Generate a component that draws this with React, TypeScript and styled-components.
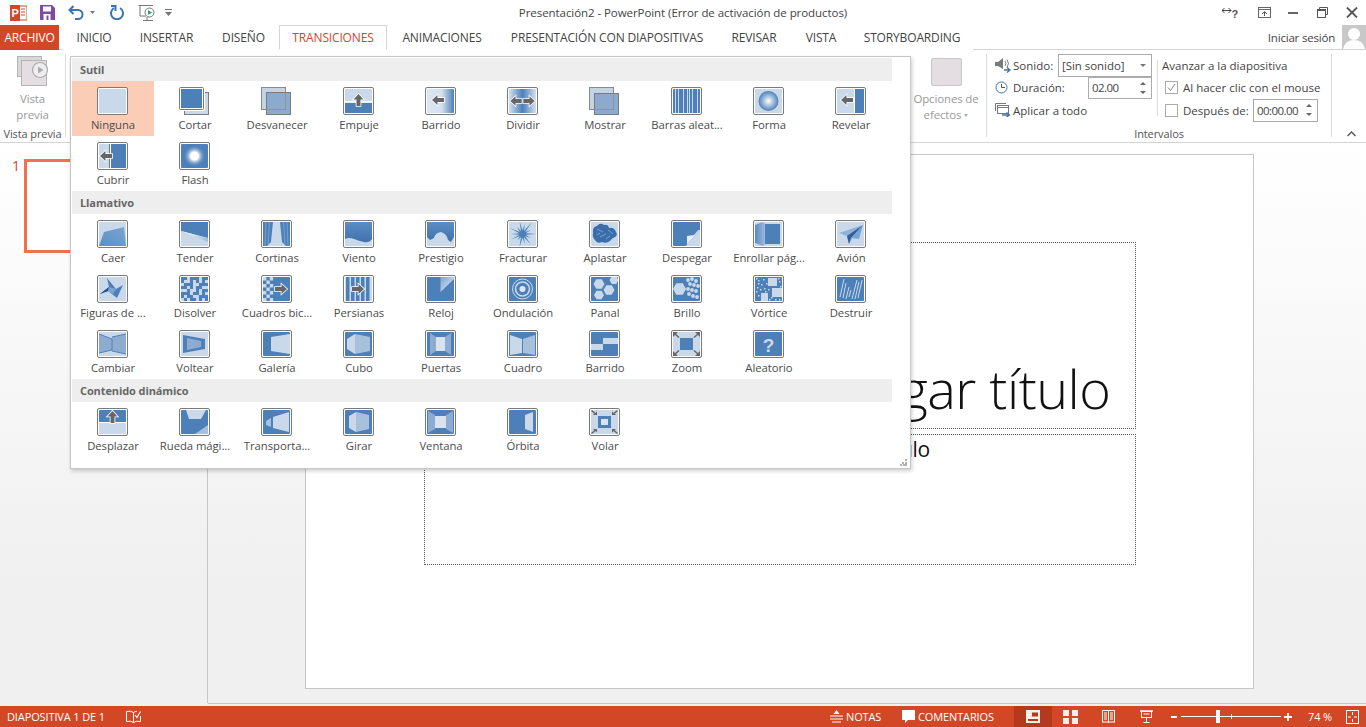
import React from 'react';
import styled, { createGlobalStyle } from 'styled-components';

const B = '#4d80b9';
const L = '#c9d9ea';
const M = '#8eacd0';
const G = '#666666';
const ACCENT = '#d24726';
const SANS = '"Open Sans", "Noto Sans", sans-serif';

const Global = createGlobalStyle`
  html, body { margin: 0; padding: 0; background: #fff; overflow: hidden; }
  * { box-sizing: border-box; }
  #root { width: 1366px; height: 727px; }
`;

const Page = styled.div`
  position: relative;
  width: 1366px;
  height: 727px;
  display: flex;
  flex-direction: column;
  font-family: ${SANS};
  font-size: 11.5px;
  color: #444;
  background: #fff;
  overflow: hidden;
`;

const TitleBar = styled.div`
  height: 25px;
  display: grid;
  grid-template-columns: 1fr auto 1fr;
  align-items: center;
`;
const Qat = styled.div`
  display: flex;
  align-items: center;
  padding-left: 10px;
  height: 25px;
`;
const QatSlot = styled.span<{ $w: number }>`
  width: ${p => p.$w}px;
  display: flex;
  align-items: center;
`;
const Title = styled.div`
  font-size: 11.5px;
  color: #444;
  letter-spacing: -0.065px;
`;
const WinControls = styled.div`
  display: flex;
  justify-content: flex-end;
  align-items: center;
  padding-right: 8px;
  height: 25px;
`;
const WinSlot = styled.span<{ $w: number }>`
  width: ${p => p.$w}px;
  display: flex;
  justify-content: flex-start;
  align-items: center;
`;

const TabBar = styled.div`
  height: 25px;
  display: flex;
  align-items: stretch;
  border-bottom: 1px solid #d4d4d4;
`;
const FileTab = styled.div`
  width: 59px;
  height: 25px;
  background: ${ACCENT};
  color: #fff;
  margin-right: 4px;
  display: flex;
  align-items: center;
  justify-content: center;
  font-size: 12px;
  letter-spacing: -0.15px;
`;
const Tab = styled.div<{ $w: number; $active?: boolean }>`
  width: ${p => p.$w}px;
  height: 25px;
  display: flex;
  align-items: center;
  justify-content: center;
  font-size: 12px;
  letter-spacing: -0.15px;
  color: ${p => (p.$active ? ACCENT : '#444')};
  background: #fff;
  ${p => (p.$active ? 'border: 1px solid #d4d4d4; border-bottom: 1px solid #fff;' : '')}
`;
const TabSpacer = styled.div`
  flex: 1;
`;
const SignIn = styled.div`
  display: flex;
  align-items: center;
  justify-content: flex-end;
  gap: 7px;
  font-size: 11.5px;
  letter-spacing: -0.2px;
`;
const Avatar = styled.div`
  width: 24px;
  height: 24px;
  overflow: hidden;
  background: #c8c8c8;
  display: flex;
`;

const Ribbon = styled.div`
  height: 93px;
  display: flex;
  border-bottom: 1px solid #d4d4d4;
  background: #fff;
`;
const PreviewGroup = styled.div`
  width: 66px;
  margin: 4px 0 5px;
  border-right: 1px solid #dcdcdc;
  display: flex;
  flex-direction: column;
  align-items: center;
`;
const PreviewIcon = styled.div`
  height: 31px;
  margin-top: 2px;
  display: flex;
`;
const MutedLabel = styled.div<{ $top?: number }>`
  color: #9a9a9a;
  text-align: center;
  line-height: 16px;
  margin-top: ${p => p.$top ?? 4}px;
  letter-spacing: -0.15px;
  white-space: nowrap;
`;
const MutedCaret = styled.span`
  display: inline-block;
  width: 0;
  height: 0;
  margin-left: 3px;
  vertical-align: middle;
  border-left: 2.5px solid transparent;
  border-right: 2.5px solid transparent;
  border-top: 3px solid #aaa;
`;
const GroupName = styled.div`
  margin-top: auto;
  margin-bottom: -4px;
  line-height: 14px;
  text-align: center;
  color: #555;
  letter-spacing: -0.1px;
  font-size: 11px;
  white-space: nowrap;
`;
const RibbonGap = styled.div`
  width: 847px;
`;
const EffectGroup = styled.div`
  width: 74px;
  margin: 4px 0 5px;
  border-right: 1px solid #dcdcdc;
  display: flex;
  flex-direction: column;
  align-items: center;
  padding-right: 7px;
`;
const EffectSwatch = styled.div`
  width: 31px;
  height: 28px;
  margin: 4px 0 0 0;
  border: 1px solid #c8c4c7;
  border-radius: 2px;
  background: #e4dee3;
`;
const TimingGroup = styled.div`
  width: 345px;
  margin: 4px 0 5px;
  border-right: 1px solid #dcdcdc;
  display: flex;
  flex-direction: column;
`;
const TimingColumns = styled.div`
  display: flex;
  flex: 1;
`;
const SoundCol = styled.div`
  width: 170px;
  padding: 0 5px 0 8px;
  display: flex;
  flex-direction: column;
`;
const AdvanceCol = styled.div`
  width: 175px;
  height: 56px;
  margin-top: 6px;
  border-left: 1px solid #dcdcdc;
  padding-left: 4px;
  display: flex;
  flex-direction: column;
`;
const CtlRow = styled.div<{ $h?: number }>`
  height: ${p => p.$h ?? 23}px;
  display: flex;
  align-items: center;
`;
const CtlIcon = styled.span`
  width: 18px;
  display: flex;
  align-items: center;
`;
const CtlText = styled.span<{ $w?: number }>`
  ${p => (p.$w ? `width: ${p.$w}px;` : '')}
  letter-spacing: 0;
  white-space: nowrap;
`;
const Combo = styled.div<{ $w: number; $h: number; $num?: boolean }>`
  width: ${p => p.$w}px;
  height: ${p => p.$h}px;
  flex: none;
  border: 1px solid #ababab;
  display: flex;
  align-items: center;
  padding-left: 3px;
  background: #fff;
  letter-spacing: ${p => (p.$num ? '-0.55px' : '-0.05px')};
`;
const ComboArrow = styled.span`
  margin-left: auto;
  margin-right: 5px;
  width: 0;
  height: 0;
  border-left: 3px solid transparent;
  border-right: 3px solid transparent;
  border-top: 3px solid #777;
`;
const SpinBtns = styled.span`
  margin-left: auto;
  margin-right: 5px;
  display: flex;
  flex-direction: column;
  gap: 6px;
`;
const Up = styled.span`
  width: 0;
  height: 0;
  border-left: 3px solid transparent;
  border-right: 3px solid transparent;
  border-bottom: 3px solid #666;
`;
const Down = styled.span`
  width: 0;
  height: 0;
  border-left: 3px solid transparent;
  border-right: 3px solid transparent;
  border-top: 3px solid #666;
`;
const Check = styled.span`
  width: 13px;
  height: 13px;
  flex: none;
  margin: 0 5px 0 3px;
  border: 1px solid #ababab;
  background: #fff;
  display: flex;
`;
const CollapseCell = styled.div`
  flex: 1;
  display: flex;
  align-items: flex-end;
  justify-content: center;
  padding: 0 0 5px 4px;
`;

const Workspace = styled.div`
  flex: 1;
  display: flex;
  background: linear-gradient(#ffffff, #f0f0f0 78%);
`;
const ThumbPanel = styled.aside`
  width: 208px;
  padding: 16px 0 0 12px;
  display: flex;
  align-items: flex-start;
  border-right: 1px solid #c6c6c6;
  height: 560px;
`;
const ThumbNumber = styled.div`
  width: 12px;
  color: ${ACCENT};
  font-size: 14px;
  line-height: 14px;
  margin-top: 0;
`;
const Thumb = styled.div`
  width: 170px;
  height: 94px;
  background: #fff;
  border: 3px solid #f0704f;
`;
const EditArea = styled.main`
  flex: 1;
  padding: 11px 0 0 97px;
  height: 561px;
  border-bottom: 1px solid #c6c6c6;
`;
const Slide = styled.div`
  width: 949px;
  height: 535px;
  background: #fff;
  border: 1px solid #c6c6c6;
  padding: 87px 0 0 118px;
  display: flex;
  flex-direction: column;
  gap: 5px;
`;
const TitleHolder = styled.div`
  width: 712px;
  height: 187px;
  border: 1px dotted #555;
  display: flex;
  align-items: flex-end;
  justify-content: center;
  font-size: 54px;
  font-weight: 300;
  line-height: 56px;
  color: #111;
  white-space: nowrap;
  padding-bottom: 12px;
  letter-spacing: -0.5px;
`;
const SubHolder = styled.div`
  width: 712px;
  height: 131px;
  border: 1px dotted #555;
  text-align: center;
  font-size: 21px;
  line-height: 28px;
  color: #111;
  letter-spacing: -0.3px;
`;

const StatusBar = styled.footer`
  height: 21px;
  margin-top: -1px;
  background: ${ACCENT};
  color: #fff;
  font-size: 11px;
  display: flex;
  align-items: center;
  padding-left: 7px;
  letter-spacing: -0.12px;
`;
const StatusText = styled.span<{ $w: number; $pad?: number }>`
  width: ${p => p.$w}px;
  padding-left: ${p => p.$pad ?? 0}px;
  white-space: nowrap;
`;
const StatusIcon = styled.span<{ $w: number }>`
  width: ${p => p.$w}px;
  display: flex;
  align-items: center;
`;
const ViewActive = styled.span`
  width: 38px;
  height: 21px;
  background: #b5391d;
  display: flex;
  align-items: center;
  justify-content: center;
  margin-right: 11px;
`;
const ZoomSlider = styled.span`
  position: relative;
  width: 100px;
  height: 1px;
  background: #fff;
  margin: 0 3px 0 4px;
`;
const ZoomThumb = styled.span`
  position: absolute;
  left: 35px;
  top: -6px;
  width: 4px;
  height: 13px;
  background: #fff;
`;
const ZoomTick = styled.span`
  position: absolute;
  left: 50px;
  top: -2px;
  width: 1px;
  height: 5px;
  background: #fff;
`;

const Gallery = styled.div`
  position: absolute;
  left: 70px;
  top: 56px;
  width: 841px;
  height: 413px;
  background: #fff;
  border: 1px solid #c6c6c6;
  box-shadow: 1px 2px 4px rgba(0, 0, 0, 0.2);
  padding: 1px 18px 0 1px;
`;
const SectionHead = styled.div`
  height: 23px;
  background: #eeeeee;
  padding-left: 8px;
  display: flex;
  align-items: center;
  font-weight: 700;
  font-size: 11px;
  color: #666;
  letter-spacing: -0.1px;
`;
const Grid = styled.div`
  display: grid;
  grid-template-columns: repeat(10, 82px);
  grid-auto-rows: 55px;
`;
const Item = styled.div<{ $sel?: boolean }>`
  display: flex;
  flex-direction: column;
  align-items: center;
  padding-top: 6px;
  background: ${p => (p.$sel ? '#fccdb6' : 'transparent')};
`;
const ItemLabel = styled.div`
  margin-top: 1px;
  line-height: 16px;
  color: #4c4c4c;
  font-size: 11.3px;
  letter-spacing: -0.05px;
  white-space: nowrap;
`;
const Grip = styled.svg`
  position: absolute;
  right: 3px;
  bottom: 2px;
`;
const ThumbSvg = styled.svg`
  display: block;
`;
const HiddenDefs = styled.svg`
  position: absolute;
`;

/* ---------- transition thumbnails ---------- */
const Frame: React.FC<{ bg?: string; children?: React.ReactNode }> = ({ bg = L, children }) => (
  <ThumbSvg width="32" height="29" viewBox="0 0 32 29">
    <rect x="0.5" y="0.5" width="30" height="27" rx="1.5" fill="#fff" stroke="#7a7a7a" />
    <svg x="2" y="2" width="27" height="24" viewBox="0 0 27 24">
      <rect width="27" height="24" rx="1" fill={bg} />
      {children}
    </svg>
  </ThumbSvg>
);

const Defs = () => (
  <HiddenDefs width="0" height="0">
    <defs>
      <linearGradient id="gWipe" x1="0" x2="1" y1="0" y2="0">
        <stop offset="0" stopColor="#dbe6f1" />
        <stop offset="0.55" stopColor="#d3e0ee" />
        <stop offset="1" stopColor={B} />
      </linearGradient>
      <linearGradient id="gSplit" x1="0" x2="1" y1="0" y2="0">
        <stop offset="0" stopColor="#d3e0ee" />
        <stop offset="0.5" stopColor={B} />
        <stop offset="1" stopColor="#d3e0ee" />
      </linearGradient>
      <radialGradient id="gShape">
        <stop offset="0" stopColor="#ffffff" />
        <stop offset="1" stopColor={B} />
      </radialGradient>
      <radialGradient id="gFlash">
        <stop offset="0" stopColor="#ffffff" />
        <stop offset="0.35" stopColor="#ffffff" />
        <stop offset="1" stopColor={B} stopOpacity="0" />
      </radialGradient>
      <linearGradient id="gFall" x1="0" x2="1" y1="1" y2="0">
        <stop offset="0" stopColor="#5b8ec6" />
        <stop offset="1" stopColor="#7ba5d4" />
      </linearGradient>
      <linearGradient id="gDrape" x1="0" x2="0" y1="0" y2="1">
        <stop offset="0" stopColor="#5c8dc4" />
        <stop offset="1" stopColor="#3f72ae" />
      </linearGradient>
      <linearGradient id="gFold" x1="0" x2="1" y1="0" y2="0">
        <stop offset="0" stopColor="#5a8ac2" />
        <stop offset="1" stopColor="#9dbade" />
      </linearGradient>
      <linearGradient id="gHang" x1="0" x2="1" y1="0" y2="1">
        <stop offset="0" stopColor="#7ba5d4" />
        <stop offset="1" stopColor="#e4ecf5" />
      </linearGradient>
      <linearGradient id="gWedge" x1="0" x2="1" y1="0" y2="0">
        <stop offset="0" stopColor="#ffffff" />
        <stop offset="1" stopColor="#9fbcdb" />
      </linearGradient>
    </defs>
  </HiddenDefs>
);

const Arrow: React.FC<{ x: number; y: number; dir?: 'l' | 'r' | 'u'; s?: number }> = ({ x, y, dir = 'l', s = 1 }) => {
  const rot = dir === 'l' ? 0 : dir === 'r' ? 180 : 90;
  return (
    <polygon
      points="-6,0 -0.5,-5 -0.5,-2 6,-2 6,2 -0.5,2 -0.5,5"
      transform={`translate(${x} ${y}) rotate(${rot}) scale(${s})`}
      fill={G}
      stroke="#fff"
      strokeWidth="1.6"
      paintOrder="stroke"
    />
  );
};

const hexPts = (cx: number, cy: number, r: number) =>
  [0, 60, 120, 180, 240, 300]
    .map(a => `${cx + r * Math.cos((a * Math.PI) / 180)},${cy + r * Math.sin((a * Math.PI) / 180)}`)
    .join(' ');

const burst = (() => {
  const out: string[] = [];
  const radii = [14, 9, 13, 10, 15, 8, 12, 11, 14, 9, 13, 10, 15, 9];
  radii.forEach((r, i) => {
    const a = (i / radii.length) * Math.PI * 2;
    const a2 = ((i + 0.5) / radii.length) * Math.PI * 2;
    out.push(`${13.5 + r * Math.cos(a)},${12 + r * Math.sin(a)}`);
    out.push(`${13.5 + 3.4 * Math.cos(a2)},${12 + 3.4 * Math.sin(a2)}`);
  });
  return out.join(' ');
})();

/* rows of the dissolve pattern, one letter per cell: x = dark block */
const DISSOLVE_ROWS = [
  'xx.xxx.xx',
  'x..x.x.x.',
  '.xxx..xxx',
  'xx.x.xx..',
  '..x..x.xx',
  'xxx.xx.x.',
  'x.xx..xxx',
  '.x.xx.x.x',
];

const I: Record<string, React.ReactNode> = {
  Ninguna: <Frame />,
  Cortar: (
    <ThumbSvg width="32" height="29" viewBox="0 0 32 29">
      <rect x="5.5" y="5.5" width="24" height="22" fill={L} stroke="#7a7a7a" />
      <rect x="0.5" y="0.5" width="24" height="22" rx="1" fill={B} stroke="#fff" strokeWidth="3" />
      <rect x="0.5" y="0.5" width="24" height="22" rx="1" fill="none" stroke="#7a7a7a" />
    </ThumbSvg>
  ),
  Desvanecer: (
    <ThumbSvg width="32" height="29" viewBox="0 0 32 29">
      <rect x="0.5" y="0.5" width="24" height="22" fill="#c3d4e7" stroke="#8a8a8a" />
      <rect x="5.5" y="5.5" width="24" height="22" fill="#8caacd" stroke="#7a7a7a" />
      <rect x="0.5" y="0.5" width="24" height="22" fill="none" stroke="#8a8a8a" strokeOpacity="0.7" />
    </ThumbSvg>
  ),
  Empuje: (
    <Frame>
      <rect y="14" width="27" height="10" fill={B} />
      <rect y="12" width="27" height="1.5" fill="#fff" />
      <Arrow x={13.5} y={11} dir="u" s={1} />
    </Frame>
  ),
  Barrido: (
    <Frame bg="url(#gWipe)">
      <Arrow x={11} y={11} />
    </Frame>
  ),
  Dividir: (
    <Frame bg="url(#gSplit)">
      <Arrow x={7} y={12} s={0.95} />
      <Arrow x={20} y={12} dir="r" s={0.95} />
    </Frame>
  ),
  Mostrar: (
    <ThumbSvg width="32" height="29" viewBox="0 0 32 29">
      <rect x="0.5" y="0.5" width="24" height="22" fill="#c3d4e7" stroke="#8a8a8a" />
      <rect x="5.5" y="6.5" width="24" height="21" fill="#8caacd" stroke="#7a7a7a" />
      <rect x="0.5" y="0.5" width="24" height="22" fill="none" stroke="#8a8a8a" strokeOpacity="0.7" />
    </ThumbSvg>
  ),
  Barras: (
    <Frame bg={B}>
      {[2, 5, 10, 14, 16, 19, 24].map(x => (
        <rect key={x} x={x} width="1" height="24" fill={L} />
      ))}
    </Frame>
  ),
  Forma: (
    <Frame>
      <circle cx="13.5" cy="12" r="10" fill="url(#gShape)" />
    </Frame>
  ),
  Revelar: (
    <Frame>
      <rect x="18" width="9" height="24" fill={B} />
      <rect x="17" width="1" height="24" fill="#fff" />
      <Arrow x={10} y={11} />
    </Frame>
  ),
  Cubrir: (
    <Frame>
      <rect x="12" width="15" height="24" fill={B} />
      <rect x="10" width="1" height="24" fill="#777" />
      <rect x="11" width="1" height="24" fill="#fff" />
      <Arrow x={7} y={12} />
    </Frame>
  ),
  Flash: (
    <Frame bg={B}>
      <circle cx="13.5" cy="12" r="11" fill="url(#gFlash)" />
    </Frame>
  ),
  Caer: (
    <Frame>
      <polygon points="5,10 25,5 27,24 0,24" fill="url(#gFall)" />
    </Frame>
  ),
  Tender: (
    <Frame>
      <polygon points="0,0 27,0 27,16 0,9" fill={B} />
      <polygon points="0,9 27,16 27,20" fill="url(#gWedge)" />
    </Frame>
  ),
  Cortinas: (
    <Frame>
      <polygon points="0,0 10,0 8,20 4,24 0,24" fill={B} />
      <polygon points="27,0 17,0 19,20 23,24 27,24" fill={B} />
      <path d="M3 0 L2 24 M6.5 0 L5 22 M24 0 L25 24 M20.5 0 L22 22" stroke="#6f9bcf" strokeWidth="1.2" />
    </Frame>
  ),
  Viento: (
    <Frame>
      <path d="M0 0 H27 V17 Q24 21 19 20 T9 17 Q4 15 0 17 Z" fill="url(#gDrape)" />
    </Frame>
  ),
  Prestigio: (
    <Frame>
      <path d="M0 0 H27 V15 L24 20 L21 18 Q20 12 14 10 Q8 11 7 16 L3 18 L0 15 Z" fill="url(#gDrape)" />
    </Frame>
  ),
  Fracturar: (
    <Frame>
      <polygon points={burst} fill={B} />
    </Frame>
  ),
  Aplastar: (
    <Frame>
      <path
        d="M2 11 Q1 5 6 4 Q9 0 13 3 Q17 2 18 6 Q23 5 25 10 Q27 13 24 15 Q21 16 19 19 Q15 22 11 20 Q6 22 4 18 Q1 15 2 11 Z"
        fill="#3a6da9"
      />
      <path d="M6 7 L12 10 M9 15 L15 12 M17 8 L22 12 M6 13 L9 11 M15 17 L19 14" stroke="#7ba4d2" strokeWidth="1" />
    </Frame>
  ),
  Despegar: (
    <Frame bg={B}>
      <polygon points="13,24 27,24 27,8 25,8" fill={L} />
      <polygon points="27,8 14,24 14,14 21,13" fill="#e4ecf5" />
      <path d="M13 24 L27 8" stroke="#9fb9d7" strokeWidth="0.8" />
    </Frame>
  ),
  Enrollar: (
    <Frame>
      <polygon points="0,3 8,0 10,2 10,22 8,24 0,21" fill="url(#gFold)" />
      <rect x="10" y="2" width="15" height="20" fill={B} />
    </Frame>
  ),
  Avion: (
    <Frame>
      <polygon points="26,3 2,11 10,14 12,22 16,15" fill="#8eb0d8" />
      <polygon points="26,3 10,14 12,22 14,16" fill="#2f5f97" />
      <polygon points="26,3 14,16 22,17" fill="#7ba4d2" />
    </Frame>
  ),
  Figuras: (
    <Frame>
      <polygon points="8,1 17,12 24,8 18,21 9,14 1,17 10,10" fill={B} />
      <polygon points="1,17 10,10 9,14" fill="#1f4f86" />
      <polygon points="10,10 17,12 14,17 9,14" fill="#7ba4d2" />
    </Frame>
  ),
  Disolver: (
    <Frame>
      {DISSOLVE_ROWS.map((row, r) =>
        row.split('').map((cell, c) =>
          cell === 'x' ? <rect key={`${r}-${c}`} x={c * 3} y={r * 3} width="3" height="3" fill={B} /> : null
        )
      )}
    </Frame>
  ),
  Cuadros: (
    <Frame bg={B}>
      {[0, 1, 2, 3, 4, 5, 6].map(r =>
        [0, 1, 2].map(c =>
          (r + c) % 2 === 0 ? <rect key={`${r}${c}`} x={c * 3.4} y={r * 3.5} width="3.4" height="3.5" fill={L} /> : null
        )
      )}
      <Arrow x={18} y={12} dir="r" />
    </Frame>
  ),
  Persianas: (
    <Frame bg={L}>
      {[1, 6, 11, 16, 21].map(x => (
        <rect key={x} x={x} width="3.5" height="24" fill={B} />
      ))}
      <Arrow x={13} y={12} dir="r" />
    </Frame>
  ),
  Reloj: (
    <Frame bg={B}>
      <polygon points="13.5,0 27,0 27,2 13.5,15" fill="url(#gHang)" />
    </Frame>
  ),
  Cambiar: (
    <Frame>
      <polygon points="0,2 13,7 13,18 0,21" fill={M} />
      <polygon points="13,5 27,2 27,22 13,19" fill={M} />
      <path d="M0 2 L13 7 V18 L0 21 M13 5 L27 2 M13 19 L27 22" stroke={B} strokeWidth="1" fill="none" />
    </Frame>
  ),
  Voltear: (
    <Frame>
      <polygon points="2,3 24,7 24,17 2,21" fill={B} />
      <polygon points="6,6 20,9 20,15 6,18" fill={M} />
    </Frame>
  ),
  Galeria: (
    <Frame bg={B}>
      <polygon points="8,5 27,2 27,22 8,19" fill={L} />
    </Frame>
  ),
  Cubo: (
    <Frame bg={B}>
      <polygon points="2,7 10,2 10,22 2,17" fill={L} />
      <polygon points="10,2 25,5 25,19 10,22" fill="#a7c0dc" />
    </Frame>
  ),
  Puertas: (
    <Frame bg={B}>
      <polygon points="3,1 9,5 9,19 3,23" fill={M} />
      <polygon points="24,1 18,5 18,19 24,23" fill={M} />
      <rect x="9" y="5" width="9" height="14" fill="#d8e3ef" />
    </Frame>
  ),
  Ondulacion: (
    <Frame bg={B}>
      <circle cx="13.5" cy="12" r="10" fill="none" stroke={L} strokeWidth="1" />
      <circle cx="13.5" cy="12" r="7" fill="none" stroke={L} strokeWidth="1.6" />
      <circle cx="13.5" cy="12" r="3" fill="#dfe8f2" />
    </Frame>
  ),
  Panal: (
    <Frame bg={B}>
      <polygon points={hexPts(8, 7, 5.5)} fill={L} />
      <polygon points={hexPts(8, 18, 5)} fill={L} />
      <polygon points={hexPts(18, 13, 5.5)} fill={L} />
      <polygon points={hexPts(23, 3, 4.5)} fill={L} />
    </Frame>
  ),
  Brillo: (
    <Frame bg={B}>
      <polygon points={hexPts(6.5, 12, 6.5)} fill={L} />
      {[
        [15, 3], [19, 2], [23, 4], [17, 7], [21, 8], [25, 9], [15, 12], [19, 13], [23, 14], [16, 17], [20, 19], [24, 20],
      ].map(([x, y]) => (
        <circle key={`${x}-${y}`} cx={x} cy={y} r="1.9" fill={L} />
      ))}
    </Frame>
  ),
  Vortice: (
    <Frame bg={B}>
      <rect x="13" y="1" width="9" height="8" fill={L} />
      <rect x="17" y="11" width="10" height="9" fill={L} />
      <rect x="6" y="16" width="7" height="8" fill={L} />
      {[
        [3, 3], [8, 2], [6, 7], [11, 6], [2, 10], [9, 11], [13, 12], [24, 4], [25, 9], [16, 20], [20, 22], [3, 18], [1, 14],
        [5, 12], [10, 14], [3, 6], [1, 1], [23, 1], [14, 22], [24, 22],
      ].map(([x, y]) => (
        <rect key={`${x}-${y}`} x={x} y={y} width="1.5" height="1.5" fill={L} />
      ))}
    </Frame>
  ),
  Destruir: (
    <Frame bg={B}>
      <path d="M3 20 L7 2 M6 21 L9 6 M9 22 L12 10 M15 22 L20 3 M18 22 L22 5 M21 21 L25 3 M12 20 L14 13" stroke={L} strokeWidth="1" />
    </Frame>
  ),
  Cuadro: (
    <Frame bg={B}>
      <polygon points="1,3 13,7 13,21 1,23" fill={L} />
      <polygon points="26,3 14,7 14,21 26,23" fill="#a7c0dc" />
    </Frame>
  ),
  BarridoB: (
    <Frame bg={B}>
      <rect x="12" y="6" width="15" height="6" fill={L} />
      <rect x="0" y="12" width="12" height="6" fill={L} />
    </Frame>
  ),
  ZoomI: (
    <Frame>
      <rect x="7" y="6" width="13" height="12" fill={B} />
      <path d="M2 2 L6 5.5 M25 2 L21 5.5 M2 22 L6 18.5 M25 22 L21 18.5" stroke={G} strokeWidth="1.5" />
      <polygon points="0,0 5,0 0,5" fill={G} />
      <polygon points="27,0 22,0 27,5" fill={G} />
      <polygon points="0,24 5,24 0,19" fill={G} />
      <polygon points="27,24 22,24 27,19" fill={G} />
    </Frame>
  ),
  Aleatorio: (
    <Frame bg={B}>
      <text x="13.5" y="19.5" textAnchor="middle" fontFamily={'"Liberation Sans", sans-serif'} fontWeight="700" fontSize="19" fill={L}>
        ?
      </text>
    </Frame>
  ),
  Desplazar: (
    <Frame bg={B}>
      <rect y="13" width="27" height="11" fill={L} />
      <rect y="12" width="27" height="1" fill="#fff" />
      <Arrow x={13.5} y={7} dir="u" />
    </Frame>
  ),
  Rueda: (
    <Frame bg={B}>
      <polygon points="5,0 25,0 20,9 8,9" fill={L} />
      <polygon points="14,24 27,15 27,24" fill="#a7c0dc" />
    </Frame>
  ),
  Transporta: (
    <Frame bg={B}>
      <polygon points="10,7 26,2 26,22 10,18" fill={L} />
      <polygon points="3,11 8,8 8,17 3,15" fill="#a7c0dc" />
    </Frame>
  ),
  Girar: (
    <Frame bg={B}>
      <polygon points="4,6 11,2 11,22 4,18" fill={L} />
      <polygon points="11,2 24,5 24,19 11,22" fill="#a7c0dc" />
    </Frame>
  ),
  Ventana: (
    <Frame bg={B}>
      <polygon points="1,1 8,5 8,19 1,23" fill={M} />
      <polygon points="26,1 19,5 19,19 26,23" fill={M} />
      <rect x="8" y="6" width="11" height="12" fill="#d8e3ef" />
    </Frame>
  ),
  Orbita: (
    <Frame bg={B}>
      <polygon points="16,5 24,2 24,22 16,19" fill={L} />
    </Frame>
  ),
  Volar: (
    <Frame>
      <rect x="7" y="6" width="13" height="12" fill={B} />
      <rect x="10" y="9" width="7" height="6" fill="#d8e3ef" />
      <path d="M0.5 0.5 L4 3.5 M26.5 0.5 L23 3.5 M0.5 23.5 L4 20.5 M26.5 23.5 L23 20.5" stroke={G} strokeWidth="1.5" />
      <polygon points="6,5 2,5 6,1.5" fill={G} />
      <polygon points="21,5 25,5 21,1.5" fill={G} />
      <polygon points="6,19 2,19 6,22.5" fill={G} />
      <polygon points="21,19 25,19 21,22.5" fill={G} />
    </Frame>
  ),
};

type T = { k: string; label: string; sel?: boolean };
const SECTIONS: { name: string; items: T[] }[] = [
  {
    name: 'Sutil',
    items: [
      { k: 'Ninguna', label: 'Ninguna', sel: true },
      { k: 'Cortar', label: 'Cortar' },
      { k: 'Desvanecer', label: 'Desvanecer' },
      { k: 'Empuje', label: 'Empuje' },
      { k: 'Barrido', label: 'Barrido' },
      { k: 'Dividir', label: 'Dividir' },
      { k: 'Mostrar', label: 'Mostrar' },
      { k: 'Barras', label: 'Barras aleat...' },
      { k: 'Forma', label: 'Forma' },
      { k: 'Revelar', label: 'Revelar' },
      { k: 'Cubrir', label: 'Cubrir' },
      { k: 'Flash', label: 'Flash' },
    ],
  },
  {
    name: 'Llamativo',
    items: [
      { k: 'Caer', label: 'Caer' },
      { k: 'Tender', label: 'Tender' },
      { k: 'Cortinas', label: 'Cortinas' },
      { k: 'Viento', label: 'Viento' },
      { k: 'Prestigio', label: 'Prestigio' },
      { k: 'Fracturar', label: 'Fracturar' },
      { k: 'Aplastar', label: 'Aplastar' },
      { k: 'Despegar', label: 'Despegar' },
      { k: 'Enrollar', label: 'Enrollar pág...' },
      { k: 'Avion', label: 'Avión' },
      { k: 'Figuras', label: 'Figuras de ...' },
      { k: 'Disolver', label: 'Disolver' },
      { k: 'Cuadros', label: 'Cuadros bic...' },
      { k: 'Persianas', label: 'Persianas' },
      { k: 'Reloj', label: 'Reloj' },
      { k: 'Ondulacion', label: 'Ondulación' },
      { k: 'Panal', label: 'Panal' },
      { k: 'Brillo', label: 'Brillo' },
      { k: 'Vortice', label: 'Vórtice' },
      { k: 'Destruir', label: 'Destruir' },
      { k: 'Cambiar', label: 'Cambiar' },
      { k: 'Voltear', label: 'Voltear' },
      { k: 'Galeria', label: 'Galería' },
      { k: 'Cubo', label: 'Cubo' },
      { k: 'Puertas', label: 'Puertas' },
      { k: 'Cuadro', label: 'Cuadro' },
      { k: 'BarridoB', label: 'Barrido' },
      { k: 'ZoomI', label: 'Zoom' },
      { k: 'Aleatorio', label: 'Aleatorio' },
    ],
  },
  {
    name: 'Contenido dinámico',
    items: [
      { k: 'Desplazar', label: 'Desplazar' },
      { k: 'Rueda', label: 'Rueda mági...' },
      { k: 'Transporta', label: 'Transporta...' },
      { k: 'Girar', label: 'Girar' },
      { k: 'Ventana', label: 'Ventana' },
      { k: 'Orbita', label: 'Órbita' },
      { k: 'Volar', label: 'Volar' },
    ],
  },
];

const TABS: [string, number][] = [
  ['INICIO', 62],
  ['INSERTAR', 83],
  ['DISEÑO', 71],
  ['TRANSICIONES', 108],
  ['ANIMACIONES', 110],
  ['PRESENTACIÓN CON DIAPOSITIVAS', 220],
  ['REVISAR', 74],
  ['VISTA', 60],
  ['STORYBOARDING', 122],
];

export default function App() {
  return (
    <Page>
      <Global />
      <Defs />
      <TitleBar>
        <Qat>
          <QatSlot $w={30}>
            <svg width="17" height="16" viewBox="0 0 17 16">
              <rect x="6" y="1" width="11" height="14" fill="#fff" stroke="#d24726" />
              <path d="M11 4h4M11 7h4M11 10h4" stroke="#d24726" />
              <rect x="0" y="0" width="10" height="16" fill="#d24726" />
              <text x="1.5" y="12" fontFamily={'"Liberation Sans", sans-serif'} fontWeight="700" fontSize="11" fill="#fff">
                P
              </text>
            </svg>
          </QatSlot>
          <QatSlot $w={28}>
            <svg width="15" height="15" viewBox="0 0 15 15">
              <path d="M0 0H12L15 3V15H0Z" fill="#7f4c9f" />
              <rect x="3" y="1.5" width="8" height="5" fill="#fff" />
              <rect x="3.5" y="9" width="7" height="6" fill="#fff" />
              <rect x="6.5" y="10.5" width="2" height="4.5" fill="#7f4c9f" />
            </svg>
          </QatSlot>
          <QatSlot $w={41}>
            <svg width="27" height="15" viewBox="0 0 27 15">
              <path d="M2 5 H10 A4.5 4.5 0 0 1 10 14 H7" fill="none" stroke="#3c74b3" strokeWidth="2" />
              <path d="M5.5 1 L1.5 5 L5.5 9" fill="none" stroke="#3c74b3" strokeWidth="2" />
              <path d="M22 6 H27 L24.5 9 Z" fill="#777" />
            </svg>
          </QatSlot>
          <QatSlot $w={29}>
            <svg width="15" height="15" viewBox="0 0 15 15">
              <path d="M5 3 A6 6 0 1 0 11 3" fill="none" stroke="#3c74b3" strokeWidth="2" />
              <path d="M2 1 H6.5 V6" fill="none" stroke="#3c74b3" strokeWidth="2" />
            </svg>
          </QatSlot>
          <QatSlot $w={27}>
            <svg width="18" height="18" viewBox="0 0 18 18">
              <path d="M0.5 1.5H15M2 2V12H8M5 16.5H15" fill="none" stroke="#777" />
              <path d="M9 17V13" stroke="#777" />
              <circle cx="11.5" cy="8.5" r="4.5" fill="#fff" stroke="#777" />
              <path d="M10 6L14 8.5L10 11Z" fill="#3f9a7a" />
            </svg>
          </QatSlot>
          <QatSlot $w={10}>
            <svg width="7" height="7" viewBox="0 0 7 7">
              <path d="M0 0.5H7" stroke="#777" />
              <path d="M0 3H7L3.5 7Z" fill="#777" />
            </svg>
          </QatSlot>
        </Qat>
        <Title>Presentación2 - PowerPoint (Error de activación de productos)</Title>
        <WinControls>
          <WinSlot $w={36}>
            <svg width="17" height="12" viewBox="0 0 17 12">
              <path d="M0 3.5H9M0 3.5L2.5 1M0 3.5L2.5 6M9 3.5L6.5 1M9 3.5L6.5 6" stroke="#444" fill="none" />
              <text x="9.5" y="11" fontFamily={'"Liberation Sans", sans-serif'} fontWeight="700" fontSize="11" fill="#555">
                ?
              </text>
            </svg>
          </WinSlot>
          <WinSlot $w={30}>
            <svg width="13" height="11" viewBox="0 0 13 11">
              <rect x="0.5" y="0.5" width="12" height="10" fill="none" stroke="#666" />
              <path d="M0 2.5H13" stroke="#666" />
              <path d="M6.5 9V5M4 7L6.5 4.5L9 7" fill="none" stroke="#555" />
            </svg>
          </WinSlot>
          <WinSlot $w={29}>
            <svg width="10" height="2" viewBox="0 0 10 2">
              <rect width="10" height="2" fill="#666" />
            </svg>
          </WinSlot>
          <WinSlot $w={29}>
            <svg width="11" height="11" viewBox="0 0 11 11">
              <path d="M2.5 2.5V0.5H10.5V7.5H8.5" fill="none" stroke="#555" />
              <rect x="0.5" y="2.5" width="8" height="8" fill="none" stroke="#555" />
              <path d="M0 3.5H9" stroke="#555" />
            </svg>
          </WinSlot>
          <WinSlot $w={12}>
            <svg width="12" height="11" viewBox="0 0 12 11">
              <path d="M1 0.5L11 10.5M11 0.5L1 10.5" stroke="#555" strokeWidth="1.8" />
            </svg>
          </WinSlot>
        </WinControls>
      </TitleBar>

      <TabBar>
        <FileTab>ARCHIVO</FileTab>
        {TABS.map(([t, w]) => (
          <Tab key={t} $w={w} $active={t === 'TRANSICIONES'}>
            {t}
          </Tab>
        ))}
        <TabSpacer />
        <SignIn>
          Iniciar sesión
          <Avatar>
            <svg width="24" height="24" viewBox="0 0 24 24">
              <circle cx="12" cy="9" r="6" fill="#fff" />
              <path d="M1 24 Q3 15 12 15 Q21 15 23 24Z" fill="#fff" />
            </svg>
          </Avatar>
        </SignIn>
      </TabBar>

      <Ribbon>
        <PreviewGroup>
          <PreviewIcon>
            <svg width="32" height="31" viewBox="0 0 32 31">
              <rect x="0.5" y="0.5" width="24" height="20" fill="#d9d9d9" stroke="#b5b5b5" />
              <rect x="4.5" y="4.5" width="25" height="25" fill="#e4dee3" stroke="#b5b5b5" />
              <circle cx="23" cy="14" r="7.5" fill="#eee" stroke="#aaa" strokeWidth="1.2" />
              <path d="M21 10.5L26.5 14L21 17.5Z" fill="#aaa" />
            </svg>
          </PreviewIcon>
          <MutedLabel>
            Vista
            <br />
            previa
          </MutedLabel>
          <GroupName>Vista previa</GroupName>
        </PreviewGroup>
        <RibbonGap />
        <EffectGroup>
          <EffectSwatch />
          <MutedLabel $top={5}>
            Opciones de
            <br />
            efectos
            <MutedCaret />
          </MutedLabel>
        </EffectGroup>
        <TimingGroup>
          <TimingColumns>
            <SoundCol>
              <CtlRow $h={22}>
                <CtlIcon>
                  <svg width="17" height="15" viewBox="0 0 17 15">
                    <path d="M0 4H3L8 0V11L3 8H0Z" fill="#7a7a7a" />
                    <path d="M10 3Q12 5.5 10 8M12 1.5Q15 5.5 12 9.5" fill="none" stroke="#7a7a7a" />
                    <path d="M9 12H14M12 9.5L15 12L12 14.5" fill="none" stroke="#3c74b3" strokeWidth="1.3" />
                  </svg>
                </CtlIcon>
                <CtlText $w={45}>Sonido:</CtlText>
                <Combo $w={94} $h={23}>
                  [Sin sonido]
                  <ComboArrow />
                </Combo>
              </CtlRow>
              <CtlRow $h={23}>
                <CtlIcon>
                  <svg width="13" height="13" viewBox="0 0 13 13">
                    <circle cx="6.5" cy="6.5" r="5.5" fill="none" stroke="#3c74b3" />
                    <path d="M6.5 3V6.5H10" fill="none" stroke="#555" />
                  </svg>
                </CtlIcon>
                <CtlText $w={75}>Duración:</CtlText>
                <Combo $w={64} $h={22} $num>
                  02.00
                  <SpinBtns>
                    <Up />
                    <Down />
                  </SpinBtns>
                </Combo>
              </CtlRow>
              <CtlRow $h={22}>
                <CtlIcon>
                  <svg width="16" height="14" viewBox="0 0 16 14">
                    <path d="M0.5 8V0.5H11" fill="none" stroke="#777" />
                    <rect x="2.5" y="2.5" width="11" height="8" fill="#fff" stroke="#777" />
                    <path d="M3 4.5H13" stroke="#777" />
                    <path d="M7 12H14M11.5 9.5L14.5 12L11.5 14" fill="none" stroke="#3c74b3" strokeWidth="1.3" />
                  </svg>
                </CtlIcon>
                <CtlText>Aplicar a todo</CtlText>
              </CtlRow>
            </SoundCol>
            <AdvanceCol>
              <CtlRow $h={10}>
                <CtlText>Avanzar a la diapositiva</CtlText>
              </CtlRow>
              <CtlRow $h={34}>
                <Check>
                  <svg width="11" height="11" viewBox="0 0 11 11">
                    <path d="M2 5.5L4.5 8.5L9 2" fill="none" stroke="#888" />
                  </svg>
                </Check>
                <CtlText>Al hacer clic con el mouse</CtlText>
              </CtlRow>
              <CtlRow $h={12}>
                <Check />
                <CtlText $w={70}>Después de:</CtlText>
                <Combo $w={65} $h={23} $num>
                  00:00.00
                  <SpinBtns>
                    <Up />
                    <Down />
                  </SpinBtns>
                </Combo>
              </CtlRow>
            </AdvanceCol>
          </TimingColumns>
          <GroupName>Intervalos</GroupName>
        </TimingGroup>
        <CollapseCell>
          <svg width="9" height="6" viewBox="0 0 9 6">
            <path d="M0.5 5L4.5 1L8.5 5" fill="none" stroke="#555" strokeWidth="1.4" />
          </svg>
        </CollapseCell>
      </Ribbon>

      <Workspace>
        <ThumbPanel>
          <ThumbNumber>1</ThumbNumber>
          <Thumb />
        </ThumbPanel>
        <EditArea>
          <Slide>
            <TitleHolder>Haga clic para agregar título</TitleHolder>
            <SubHolder>Haga clic para agregar subtítulo</SubHolder>
          </Slide>
        </EditArea>
      </Workspace>

      <StatusBar>
        <StatusText $w={119}>DIAPOSITIVA 1 DE 1</StatusText>
        <StatusIcon $w={704}>
          <svg width="15" height="14" viewBox="0 0 15 14">
            <path d="M7.5 2.5Q5 0.5 0.5 1.5V11.5Q5 10.5 7.5 12.5V2.5" fill="none" stroke="#fff" />
            <path d="M7.5 2.5Q9 1.5 11 1.2M7.5 12.5Q10 10.5 14.5 11.5V6" fill="none" stroke="#fff" />
            <path d="M9 5L11 7.5L14.5 1.5" fill="none" stroke="#fff" strokeWidth="1.2" />
          </svg>
        </StatusIcon>
        <StatusIcon $w={16}>
          <svg width="13" height="13" viewBox="0 0 13 13">
            <path d="M6.5 0L9.5 4H3.5Z" fill="#fff" />
            <path d="M0 6H13M0 9H13M2 12H11" stroke="#fff" />
          </svg>
        </StatusIcon>
        <StatusText $w={56}>NOTAS</StatusText>
        <StatusIcon $w={16}>
          <svg width="13" height="13" viewBox="0 0 13 13">
            <path d="M0 0H13V10H6L3 13V10H0Z" fill="#fff" />
          </svg>
        </StatusIcon>
        <StatusText $w={96}>COMENTARIOS</StatusText>
        <ViewActive>
          <svg width="14" height="13" viewBox="0 0 14 13">
            <path d="M0 0H14V13H0Z" fill="#fbeee9" />
            <rect x="6" y="2.5" width="6" height="4" fill="#b5391d" />
            <rect x="2" y="9" width="10" height="2" fill="#b5391d" />
          </svg>
        </ViewActive>
        <StatusIcon $w={39}>
          <svg width="15" height="14" viewBox="0 0 15 14">
            <rect width="6" height="6" fill="#fbeee9" />
            <rect x="9" width="6" height="6" fill="#fbeee9" />
            <rect y="8" width="6" height="6" fill="#fbeee9" />
            <rect x="9" y="8" width="6" height="6" fill="#fbeee9" />
          </svg>
        </StatusIcon>
        <StatusIcon $w={38}>
          <svg width="13" height="14" viewBox="0 0 13 14">
            <rect x="0.5" y="0.5" width="12" height="11.5" fill="none" stroke="#fff" />
            <path d="M6.5 1V13M2 3H5M2 5H5M2 7H5M2 9H5M8 3H11M8 5H11M8 7H11M8 9H11" stroke="#fff" />
          </svg>
        </StatusIcon>
        <StatusIcon $w={31}>
          <svg width="13" height="13" viewBox="0 0 13 13">
            <path d="M0 1H13" stroke="#fff" strokeWidth="1.5" />
            <rect x="1.5" y="1.5" width="10" height="6" fill="none" stroke="#fff" />
            <path d="M3.5 4H9.5M6.5 8V12M3.5 12.5H9.5" stroke="#fff" />
          </svg>
        </StatusIcon>
        <svg width="6" height="2" viewBox="0 0 6 2">
          <rect width="6" height="2" fill="#fff" />
        </svg>
        <ZoomSlider>
          <ZoomThumb />
          <ZoomTick />
        </ZoomSlider>
        <svg width="8" height="8" viewBox="0 0 8 8">
          <path d="M4 0V8M0 4H8" stroke="#fff" strokeWidth="1.8" />
        </svg>
        <StatusText $w={54} $pad={16}>
          74 %
        </StatusText>
        <svg width="13" height="14" viewBox="0 0 13 14">
          <rect x="0.5" y="0.5" width="12" height="13" fill="none" stroke="#fff" />
          <path d="M6.5 2V5M6.5 9V12M2 7H5M8 7H11" stroke="#fff" />
        </svg>
      </StatusBar>

      <Gallery>
        {SECTIONS.map(s => (
          <React.Fragment key={s.name}>
            <SectionHead>{s.name}</SectionHead>
            <Grid>
              {s.items.map(it => (
                <Item key={it.k} $sel={it.sel}>
                  {I[it.k]}
                  <ItemLabel>{it.label}</ItemLabel>
                </Item>
              ))}
            </Grid>
          </React.Fragment>
        ))}
        <Grip width="7" height="7" viewBox="0 0 7 7">
          <path d="M5 0h2v2H5zM2 3h2v2H2zM5 3h2v2H5zM0 5h2v2H0zM3 5h2v2H3zM5 5h2v2H5z" fill="#b0b0b0" />
        </Grip>
      </Gallery>
    </Page>
  );
}
